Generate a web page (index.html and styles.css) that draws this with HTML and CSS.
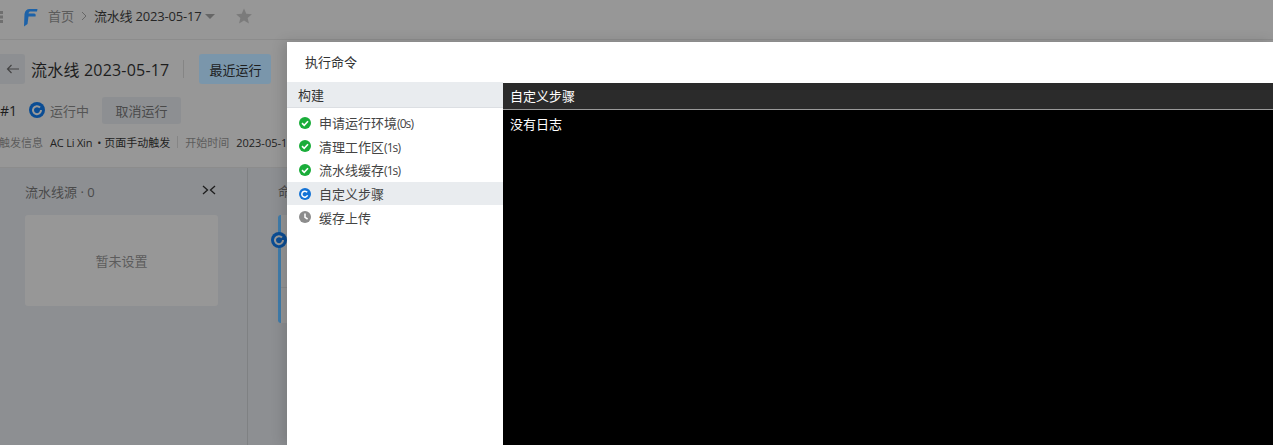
FILE: index.html
```html
<!DOCTYPE html>
<html lang="zh">
<head>
<meta charset="utf-8">
<title>执行命令</title>
<link rel="stylesheet" href="styles.css">
</head>
<body>
<div class="page">
  <header class="topbar">
    <svg class="grip" width="3" height="12" viewBox="0 0 3 12"><path d="M0 0H3V3H0ZM0 4.500H3V7.500H0ZM0 9H3V12H0Z" fill="#6f6f6f"/></svg>
    <svg class="logo" width="15" height="19" viewBox="0 0 15 19"><path d="M1.500 6C2 2.500 4 1 6.500 1H14.500L14 3.500H7.500C6.500 3.500 5.800 4 5.500 5.500L11 5.500C12.500 5.500 13 6.500 12.500 8.500H5.500L4.500 16L1 18.500Z" fill="#1d62a8"/></svg>
    <span class="crumb">首页</span>
    <svg class="chev" width="8" height="10" viewBox="0 0 8 10"><path d="M2 1L6 5L2 9" fill="none" stroke="#666" stroke-width="1"/></svg>
    <span class="crumb-current">流水线 2023-05-17</span>
    <span class="caret"></span>
    <svg class="star" width="18" height="18" viewBox="0 0 24 24"><path d="M12 2L15 9L22.500 9.600L16.800 14.500L18.600 22L12 18L5.400 22L7.200 14.500L1.500 9.600L9 9Z" fill="#7b7b7b"/></svg>
  </header>
  <section class="head">
    <div class="title-row">
      <span class="back"><svg width="14" height="10" viewBox="0 0 14 10"><path d="M13 5H1.500M5.500 1L1.500 5L5.500 9" fill="none" stroke="#444" stroke-width="1.200"/></svg></span>
      <h1 class="title">流水线 2023-05-17</h1>
      <span class="vline"></span>
      <span class="btn-primary">最近运行</span>
    </div>
    <div class="status-row">
      <span class="run-no">#1</span>
      <svg class="spin" width="16" height="16" viewBox="0 0 16 16"><circle cx="8" cy="8" r="8" fill="#0b4d94"/><path d="M11 5.500A4 4 0 1 0 12 8" fill="none" stroke="#9a9a9a" stroke-width="2"/></svg>
      <span class="running">运行中</span>
      <span class="btn-grey">取消运行</span>
    </div>
    <div class="meta-row">
      <span class="meta-k">触发信息</span>
      <span class="meta-v meta-name">AC Li Xin</span>
      <span class="meta-v">• 页面手动触发</span>
      <span class="meta-sep"></span>
      <span class="meta-k">开始时间</span>
      <span class="meta-v">2023-05-17</span>
    </div>
  </section>
  <section class="board">
    <div class="source">
      <div class="source-head">
        <span>流水线源 · 0</span>
        <svg class="collapse" width="14" height="10" viewBox="0 0 14 10"><path d="M1 1L5.500 5L1 9M13 1L8.500 5L13 9" fill="none" stroke="#1d1d1d" stroke-width="1.300"/></svg>
      </div>
      <div class="empty">暂未设置</div>
    </div>
    <div class="stage">
      <span class="stage-title">命令</span>
      <div class="stage-card">
        <div class="stage-divider"></div>
        <svg class="stage-spin" width="16" height="16" viewBox="0 0 16 16"><circle cx="8" cy="8" r="8" fill="#0b4d94"/><path d="M11 5.500A4 4 0 1 0 12 8" fill="none" stroke="#9a9a9a" stroke-width="2"/></svg>
      </div>
    </div>
  </section>
</div>

<div class="drawer">
  <div class="drawer-title">执行命令</div>
  <div class="drawer-body">
    <aside class="steps">
      <div class="steps-head">构建</div>
      <ul class="step-list">
        <li class="step"><svg width="12" height="12" viewBox="0 0 12 12"><circle cx="6" cy="6" r="6" fill="#1aad3a"/><path d="M3 6.200L5.200 8.300L9 4.200" fill="none" stroke="#fff" stroke-width="1.600"/></svg><span>申请运行环境<span class="dur">(0s)</span></span></li>
        <li class="step"><svg width="12" height="12" viewBox="0 0 12 12"><circle cx="6" cy="6" r="6" fill="#1aad3a"/><path d="M3 6.200L5.200 8.300L9 4.200" fill="none" stroke="#fff" stroke-width="1.600"/></svg><span>清理工作区<span class="dur">(1s)</span></span></li>
        <li class="step"><svg width="12" height="12" viewBox="0 0 12 12"><circle cx="6" cy="6" r="6" fill="#1aad3a"/><path d="M3 6.200L5.200 8.300L9 4.200" fill="none" stroke="#fff" stroke-width="1.600"/></svg><span>流水线缓存<span class="dur">(1s)</span></span></li>
        <li class="step step-active"><svg width="12" height="12" viewBox="0 0 12 12"><circle cx="6" cy="6" r="6" fill="#1473d6"/><path d="M8.200 4.300A3 3 0 1 0 8.600 7.300" fill="none" stroke="#fff" stroke-width="1.500"/></svg><span>自定义步骤</span></li>
        <li class="step"><svg width="12" height="12" viewBox="0 0 12 12"><circle cx="6" cy="6" r="6" fill="#8c8c8c"/><path d="M6 2.500V6.300L8.600 8" fill="none" stroke="#fff" stroke-width="1.500"/></svg><span>缓存上传</span></li>
      </ul>
    </aside>
    <main class="console">
      <div class="console-head">自定义步骤</div>
      <div class="console-log">没有日志</div>
    </main>
  </div>
</div>
</body>
</html>
```
FILE: styles.css
```css
* { box-sizing: border-box; }
html, body { margin: 0; height: 100%; overflow: hidden; }
body {
  width: 1273px;
  height: 445px;
  position: relative;
  background: #8c8e91;
  font-family: "Open Sans", "Noto Sans CJK SC", sans-serif;
  font-size: 12px;
  color: #2a2a2a;
}
.page { display: flex; flex-direction: column; height: 445px; }
.topbar {
  height: 40px;
  flex: none;
  display: flex;
  align-items: center;
  background: #979797;
  border-bottom: 1px solid #8c8c8c;
  font-size: 13px;
}
.topbar > * { margin-top: -7px; }
.grip { margin-right: 20px; margin-top: -6px; }
.logo { margin-right: 10px; margin-top: -5px; }
.topbar .crumb { color: #5c5c5c; margin: -9px 6px 0 0; }
.chev { margin-right: 6px; }
.topbar .crumb-current { color: #262626; margin-top: -9px; letter-spacing: -0.2px; }
.caret {
  width: 0; height: 0;
  margin-left: 4px;
  border: 5px solid transparent;
  border-top-color: #666;
  border-bottom-width: 0;
}
.star { margin-left: 20px; }
.head {
  height: 128px;
  flex: none;
  background: #979797;
  border-bottom: 1px solid #8c8c8c;
  overflow: hidden;
}
.title-row { height: 30px; margin-top: 14px; display: flex; align-items: center; }
.back {
  width: 25px;
  height: 30px;
  background: #8d8f92;
  border-radius: 0 3px 3px 0;
  display: flex;
  align-items: center;
  justify-content: center;
  margin-right: 6px;
}
.title { margin: 0; font-size: 16px; font-weight: 400; color: #1d1d1d; white-space: nowrap; letter-spacing: 0.2px; }
.vline { width: 1px; height: 18px; background: #858585; margin: 0 15px 0 14px; }
.btn-primary {
  width: 72px;
  height: 30px;
  background: #7a96ab;
  border-radius: 3px;
  display: flex;
  align-items: center;
  justify-content: center;
  font-size: 13px;
  color: #1d1d1d;
}
.status-row { display: flex; align-items: center; height: 28px; margin-top: 12px; }
.run-no { font-size: 14px; color: #1d1d1d; margin-right: 12px; }
.spin { margin-right: 5px; }
.running { font-size: 13px; color: #555; margin-right: 13px; }
.btn-grey {
  width: 79px;
  height: 27px;
  background: #8d8f92;
  border-radius: 3px;
  display: flex;
  align-items: center;
  justify-content: center;
  font-size: 13px;
  color: #4a4a4a;
}
.meta-row { display: flex; align-items: center; height: 18px; margin-top: 9px; font-size: 11px; white-space: nowrap; margin-left: -1px; }
.meta-k { color: #5c5c5c; margin-right: 7px; }
.meta-v { color: #222; margin-right: 5px; }
.meta-name { letter-spacing: -0.2px; }
.meta-sep { width: 1px; height: 12px; background: #858585; margin: 0 7px 0 2px; }
.board { flex: 1; display: flex; background: #8d8f92; }
.source { width: 248px; border-right: 1px solid #7f8183; padding: 13px 31px 0 25px; flex: none; }
.source-head {
  display: flex;
  align-items: center;
  justify-content: space-between;
  font-size: 13px;
  color: #4a4a4a;
  height: 20px;
  margin-bottom: 14px;
}
.collapse { margin-top: -2px; }
.empty {
  width: 193px;
  height: 91px;
  background: #979797;
  border-radius: 3px;
  display: flex;
  align-items: center;
  justify-content: center;
  font-size: 13px;
  color: #5c5c5c;
}
.stage { flex: 1; padding: 13px 0 0 30px; min-width: 0; }
.stage-title { display: block; height: 20px; font-size: 13px; color: #4a4a4a; margin-bottom: 14px; }
.stage-card {
  position: relative;
  height: 108px;
  background: #979797;
  border-left: 3px solid #3f7cab;
  border-radius: 3px;
}
.stage-divider { height: 73px; border-bottom: 1px solid #8c8c8c; }
.stage-spin { position: absolute; left: -10px; top: 17px; }
.drawer {
  position: absolute;
  left: 287px;
  top: 42px;
  right: 0;
  bottom: 0;
  background: #fff;
  display: flex;
  flex-direction: column;
  box-shadow: -4px 0 12px rgba(0,0,0,.14);
}
.drawer-title { height: 40px; flex: none; padding: 0 0 2px 18px; display: flex; align-items: center; font-size: 13px; color: #333; }
.drawer-body { flex: 1; display: flex; min-height: 0; }
.steps { width: 216px; flex: none; }
.steps-head {
  height: 26px;
  background: #e9ecef;
  border-bottom: 1px solid #dcdfe3;
  padding-left: 11px;
  display: flex;
  align-items: center;
  font-size: 13px;
  color: #333;
}
.step-list { list-style: none; margin: 3px 0 0; padding: 0; }
.step {
  height: 23.600px;
  display: flex;
  align-items: center;
  gap: 8px;
  padding-left: 12px;
  font-size: 13px;
  color: #444;
}
.dur { font-size: 12px; letter-spacing: -0.9px; }
.step-active { background: #e9ecef; }
.console { flex: 1; background: #000; display: flex; flex-direction: column; margin-top: 1px; }
.console-head {
  height: 27px;
  background: #2b2b2b;
  border-bottom: 1px solid #999;
  padding: 0 7px 1px;
  display: flex;
  align-items: center;
  color: #fff;
  font-size: 13px;
}
.console-log { padding: 4px 7px; color: #fff; font-size: 13px; line-height: 20px; }
```
